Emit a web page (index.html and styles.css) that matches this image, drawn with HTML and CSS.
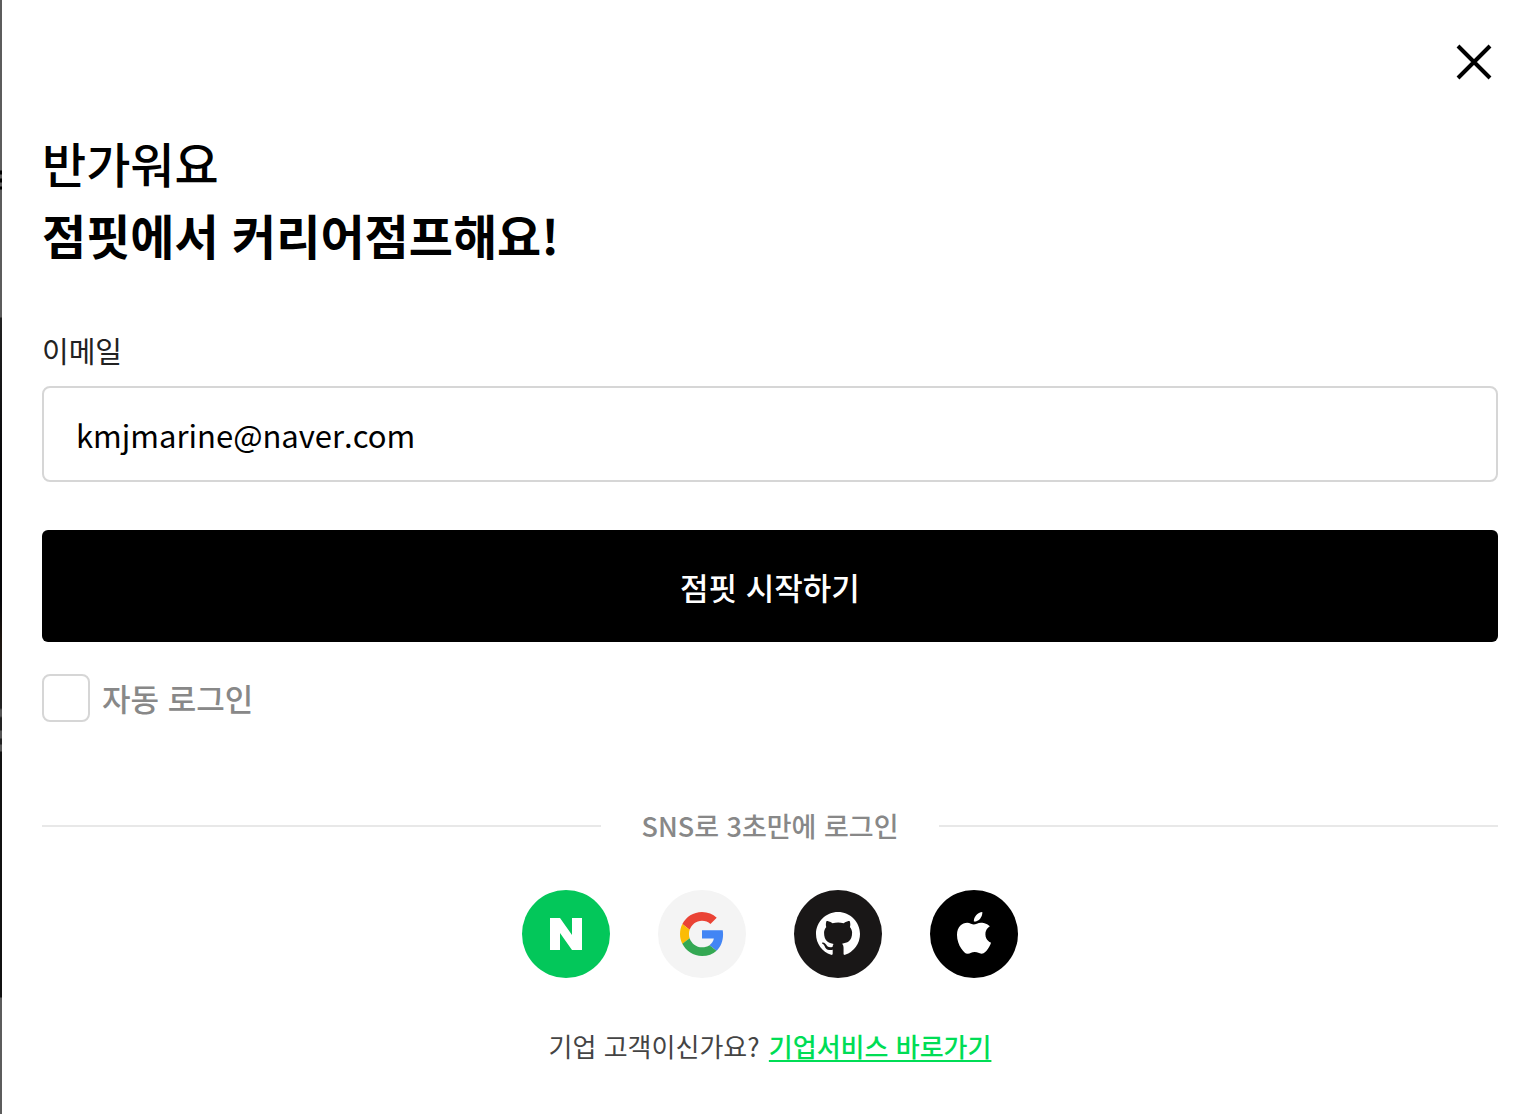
FILE: index.html
```
<!DOCTYPE html>
<html lang="ko">
<head>
<meta charset="utf-8">
<title>점핏 로그인</title>
<link rel="stylesheet" href="styles.css">
</head>
<body>
<main class="login_modal">
	<button type="button" class="btn_close" aria-label="닫기">
		<svg width="36" height="36" viewBox="0 0 36 36"><path d="M2 2L34 34M34 2L2 34" stroke="#000" stroke-width="4"/></svg>
	</button>
	<h1 class="title">반가워요<br><strong>점핏에서 커리어점프해요!</strong></h1>
	<form class="login_form">
		<label for="email" class="email_label">이메일</label>
		<input type="email" id="email" class="email" value="kmjmarine@naver.com">
		<button type="button" class="btn_start">점핏 시작하기</button>
		<div class="auto_login">
			<input type="checkbox" id="auto" class="check">
			<label for="auto">자동 로그인</label>
		</div>
	</form>
	<div class="divider">SNS로 3초만에 로그인</div>
	<div class="sns">
		<button type="button" class="naver" aria-label="네이버">
			<svg width="88" height="88" viewBox="0 0 88 88"><path d="M28 28h10l12 17V28h10v32H50L38 43v17H28z" fill="#fff"/></svg>
		</button>
		<button type="button" class="google" aria-label="구글">
			<svg width="44" height="44" viewBox="0 0 48 48">
				<path fill="#EA4335" d="M24 9.5c3.54 0 6.71 1.22 9.21 3.6l6.85-6.85C35.9 2.38 30.47 0 24 0 14.62 0 6.51 5.38 2.56 13.22l7.98 6.19C12.43 13.72 17.74 9.5 24 9.5z"/>
				<path fill="#4285F4" d="M46.98 24.55c0-1.57-.15-3.09-.38-4.55H24v9.02h12.94c-.58 2.96-2.26 5.48-4.78 7.18l7.73 6c4.51-4.18 7.09-10.36 7.09-17.65z"/>
				<path fill="#FBBC05" d="M10.53 28.59c-.48-1.45-.76-2.99-.76-4.59s.27-3.14.76-4.59l-7.98-6.19C.92 16.46 0 20.12 0 24s.92 7.54 2.56 10.78z"/>
				<path fill="#34A853" d="M24 48c6.48 0 11.93-2.13 15.89-5.81l-7.73-6c-2.15 1.45-4.92 2.3-8.16 2.3-6.26 0-11.57-4.22-13.47-9.91l-7.98 6.19C6.51 42.62 14.62 48 24 48z"/>
			</svg>
		</button>
		<button type="button" class="github" aria-label="깃허브">
			<svg width="44" height="44" viewBox="0 0 16 16"><path fill="#fff" d="M8 0C3.58 0 0 3.58 0 8c0 3.54 2.29 6.53 5.47 7.59.4.07.6-.05.6-.38V13.7c-2.01.37-2.58-.47-2.74-.92-.09-.23-.48-.94-.82-1.13-.28-.15-.68-.52-.01-.53.63-.01 1.08.58 1.23.82.72 1.21 1.72.87 2.33.66.07-.52.13-.77.36-1-1.78-.2-3.49-.96-3.49-4.02 0-.87.31-1.59.82-2.15-.08-.2-.36-1.02.08-2.12 0 0 .67-.21 2.2.82.64-.18 1.32-.27 2-.27s1.36.09 2 .27c1.53-1.04 2.2-.82 2.2-.82.44 1.1.16 1.92.08 2.12.51.56.82 1.27.82 2.15 0 3.07-1.87 3.75-3.65 3.95.29.25.54.73.54 1.48v2.2c0 .21.15.46.55.38A8.01 8.01 0 0 0 16 8c0-4.42-3.58-8-8-8z"/></svg>
		</button>
		<button type="button" class="apple" aria-label="애플">
			<svg width="34" height="44" viewBox="0 0 814 1053"><path fill="#fff" d="M788 341c-6 4-108 62-108 190 0 149 130 201 134 202-1 4-21 72-69 142-43 62-88 123-156 123s-86-39-164-39c-77 0-104 41-167 41s-106-57-156-127C44 790 0 666 0 548c0-189 123-289 244-289 64 0 118 42 158 42 39 0 99-45 173-45 28 0 129 3 213 85zM554 159c31-36 53-87 53-139 0-7-1-14-2-20-50 2-111 34-147 76-28 32-55 83-55 135 0 8 1 16 2 18 3 1 8 1 13 1 45 0 103-30 136-71z"/></svg>
		</button>
	</div>
	<p class="company">기업 고객이신가요? <a href="#">기업서비스 바로가기</a></p>
</main>
</body>
</html>
```

FILE: styles.css
```
* { box-sizing: border-box; }
/* dimmed page behind the modal shows at the left edge */
body { margin: 0; padding-left: 2px; color: #000; font-family: "Noto Sans CJK KR", sans-serif;
	background: linear-gradient(#5c5c5c 170px, #000 171px 174px, #5c5c5c 175px 178px, #000 179px 182px, #5c5c5c 183px 186px, #000 187px 189px, #5c5c5c 190px 317px, #222 318px, #050508 470px 600px, #1c140e 640px, #222 708px, #555 710px 716px, #222 718px 730px, #555 731px 738px, #222 739px 744px, #555 745px 751px, #111 752px 997px, #5c5c5c 998px); }
button, input { font-family: inherit; }
button { border: 0; padding: 0; cursor: pointer; }
.login_modal { min-height: 100vh; padding: 40px 38px 40px 40px; background: #fff; display: flex; flex-direction: column; }
.btn_close { align-self: flex-end; width: 48px; height: 44px; background: none; display: flex; align-items: center; justify-content: center; }
.title { margin: 42px 0 0; font-size: 48px; line-height: 72px; font-weight: 500; }
.title strong { font-weight: 700; }
.login_form { display: flex; flex-direction: column; margin-top: 60px; }
.email_label { font-size: 29px; line-height: 40px; color: #222; }
.email { height: 96px; margin-top: 16px; padding: 0 32px; border: 2px solid #d6d6d6; border-radius: 8px; font-size: 31px; outline: 0; }
.btn_start { height: 112px; margin-top: 48px; border-radius: 6px; background: #000; color: #fff; font-size: 31px; font-weight: 500; }
.auto_login { display: flex; align-items: center; gap: 12px; margin-top: 32px; font-size: 31px; line-height: 48px; font-weight: 500; color: #888; }
.check { appearance: none; width: 48px; height: 48px; margin: 0; border: 2px solid #d6d6d6; border-radius: 8px; }
.divider { display: flex; align-items: center; gap: 40px; margin-top: 84px; font-size: 27px; line-height: 40px; font-weight: 500; color: #888; }
.divider::before, .divider::after { content: ""; flex: 1; height: 2px; background: #e8e8e8; }
.sns { display: flex; justify-content: center; gap: 48px; margin-top: 44px; }
.sns button { width: 88px; height: 88px; border-radius: 50%; display: flex; align-items: center; justify-content: center; }
.sns .naver { background: #03c75a; }
.sns .google { background: #f4f4f4; }
.sns .github { background: #191717; }
.sns .apple { background: #000; }
.company { margin: 48px 0 0; font-size: 26px; line-height: 40px; text-align: center; color: #444; }
.company a { margin-left: 2px; color: #00dd55; font-weight: 500; text-underline-offset: 3px; text-decoration-thickness: 2px; }
```
